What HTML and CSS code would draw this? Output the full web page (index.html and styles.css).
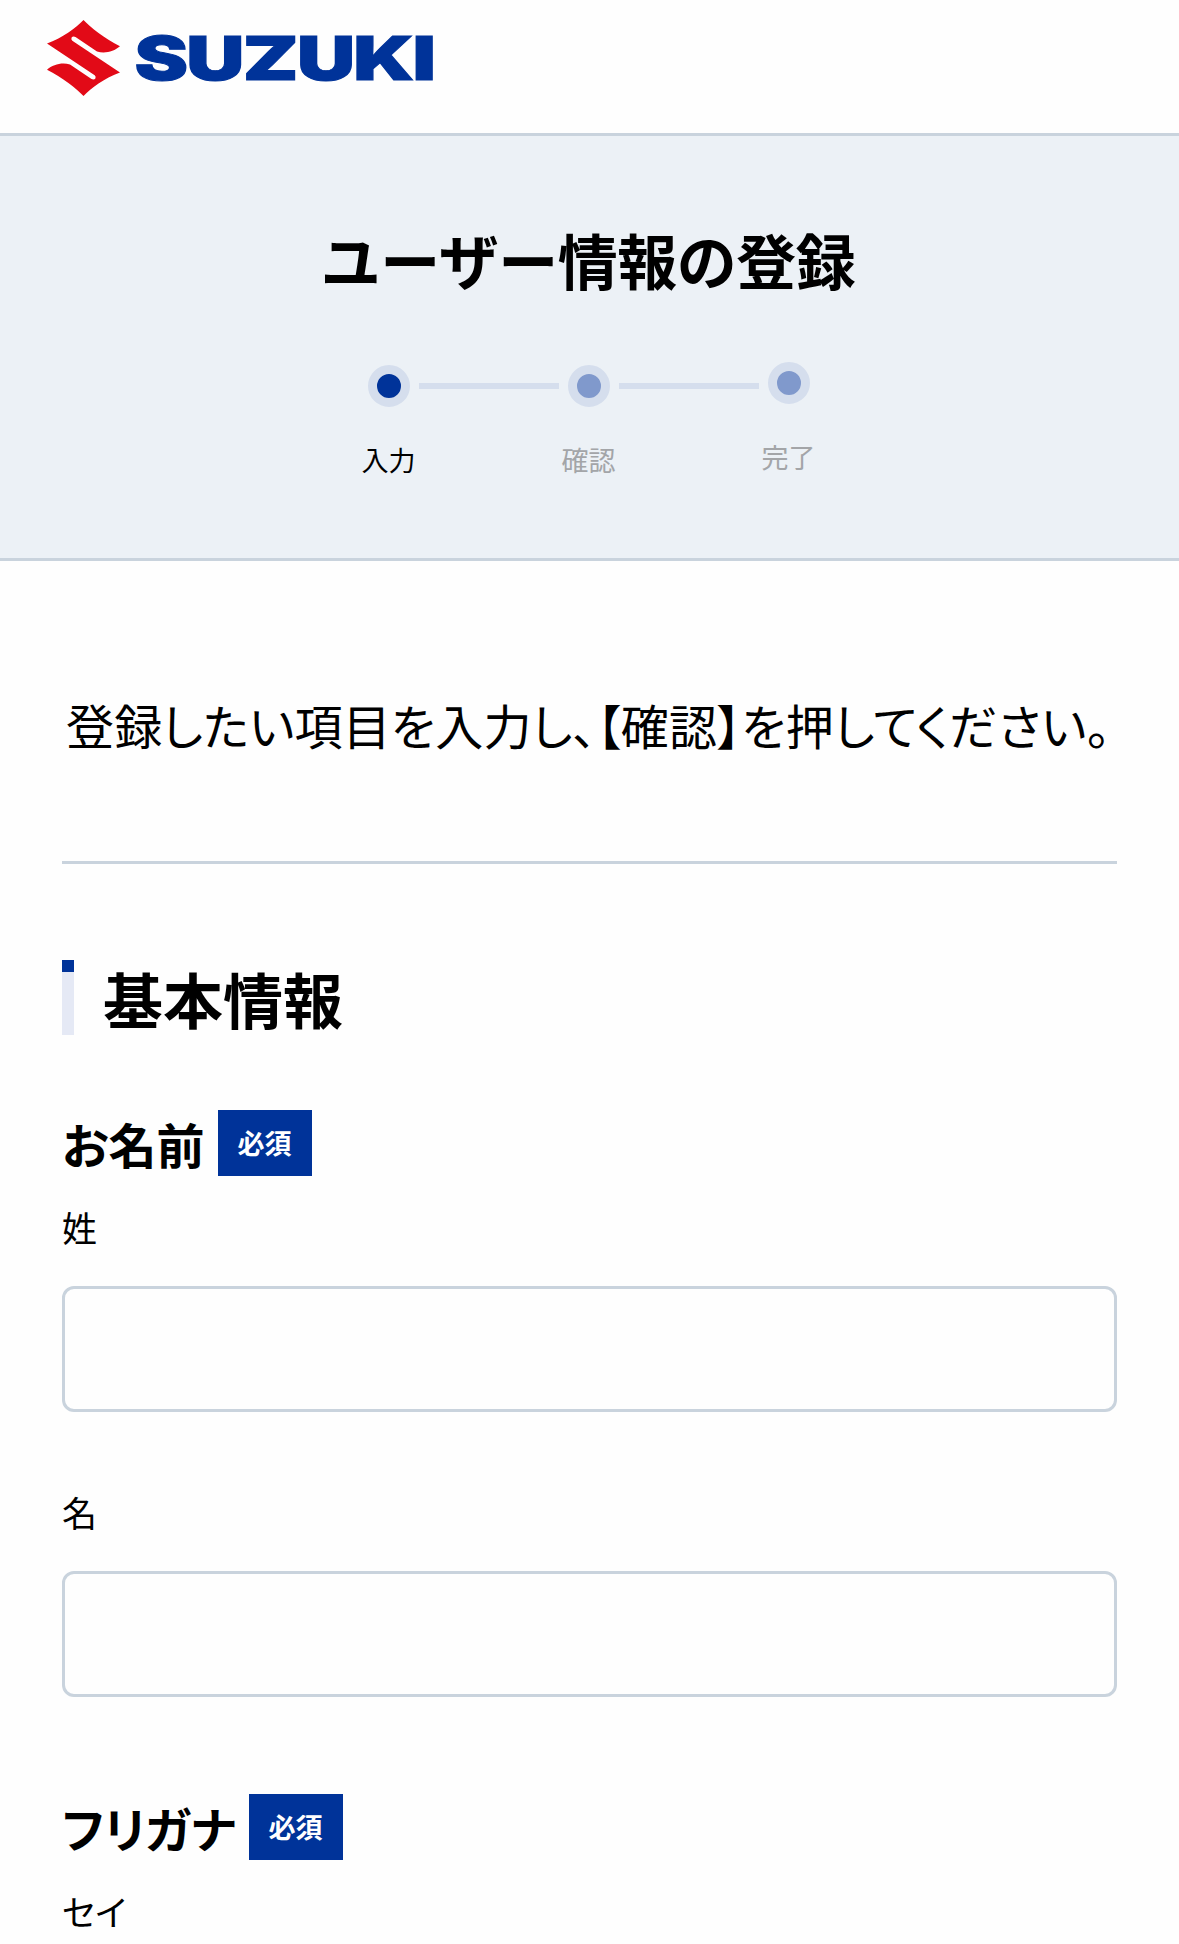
FILE: index.html
```
<!DOCTYPE html>
<html lang="ja">

<head>
    <meta charset="UTF-8">
    <meta name="viewport" content="width=device-width, initial-scale=1.0">
    <title>ユーザー情報の登録</title>
    <link rel="stylesheet" href="styles.css">
</head>

<body>
    <header class="site-header">
        <svg class="logo-mark" viewBox="0 0 73 76" aria-hidden="true">
            <path fill="#e20a17" d="M36.500 0C43 7 58 19 73 26.300C67 31.500 58 34 50 31.500L28.500 17Q26 15.800 24.600 17.600Q23.800 19.300 25.300 20.800L73 52.500C58 58 44 68 36.500 76C30 69 15 57 0 49.700C6 44.500 15 42 23 44.500L44.500 59Q47 60.200 48.400 58.400Q49.200 56.700 47.700 55.200L0 23.500C15 18 29 8 36.500 0Z"/>
        </svg>
        <svg class="logo-name" viewBox="0 0 300 54">
            <text class="logo-text" transform="translate(-2.500 49) scale(1.34 1)" textLength="225" lengthAdjust="spacing">SUZUKI</text>
        </svg>
    </header>

    <section class="page-head">
        <h1>ユーザー情報の登録</h1>
        <ol class="steps">
            <li class="step current">
                <span class="dot"></span>
                <span class="step-name">入力</span>
            </li>
            <li class="bar"></li>
            <li class="step">
                <span class="dot"></span>
                <span class="step-name">確認</span>
            </li>
            <li class="bar"></li>
            <li class="step last">
                <span class="dot"></span>
                <span class="step-name">完了</span>
            </li>
        </ol>
    </section>

    <main class="content">
        <p class="lead">登録したい項目を入力し、【確認】を押してください。</p>

        <form id="userForm">
            <h2>基本情報</h2>

            <!-- お名前 -->
            <div class="field-group">
                <h3><span class="field-title">お名前</span><span class="required">必須</span></h3>
                <label for="last-name">姓</label>
                <input type="text" id="last-name">
                <label for="first-name">名</label>
                <input type="text" id="first-name">
            </div>

            <!-- フリガナ -->
            <div class="field-group">
                <h3><span class="field-title">フリガナ</span><span class="required">必須</span></h3>
                <label for="last-kana">セイ</label>
            </div>
        </form>
    </main>
</body>

</html>
```
FILE: styles.css
```
* {
    box-sizing: border-box;
}

body {
    font-family: "Noto Sans CJK JP", sans-serif;
    font-feature-settings: "palt";
    margin: 0;
    height: 1944px;
    overflow: hidden;
    background-color: #fefefe;
    color: #000;
}

h1,
h2,
h3,
p,
ol {
    margin: 0;
    padding: 0;
}

.site-header {
    display: flex;
    align-items: flex-start;
    gap: 17px;
    height: 133px;
    padding: 20px 46px 0 47px;
}

.logo-mark {
    width: 73px;
    height: 76px;
}

.logo-name {
    width: 300px;
    height: 54px;
    margin-top: 11px;
    overflow: visible;
}

.logo-text {
    font-family: Inter, sans-serif;
    font-size: 60px;
    font-weight: 900;
    fill: #003399;
    stroke: #003399;
    stroke-width: 1px;
}

.page-head {
    height: 428px;
    padding-top: 78px;
    background-color: #ecf1f6;
    border-top: 3px solid #c9d3dd;
    border-bottom: 3px solid #c9d3dd;
}

h1 {
    padding-right: 3px;
    font-feature-settings: normal;
    font-size: 60px;
    letter-spacing: -0.5px;
    line-height: 89px;
    text-align: center;
}

.steps {
    display: flex;
    justify-content: center;
    gap: 9px;
    margin-top: 62px;
    padding-right: 2px;
    list-style: none;
}

.step {
    display: flex;
    flex-direction: column;
    align-items: center;
    width: 42px;
    color: #a3a5a8;
}

.step.last {
    margin-top: -3px;
}

.dot {
    width: 42px;
    height: 42px;
    border: 9px solid #d5deed;
    border-radius: 50%;
    background-color: #8099cc;
}

.step-name {
    margin-top: 33px;
    font-size: 27px;
    line-height: 40px;
    white-space: nowrap;
}

.step.current {
    color: #000;
}

.step.current .dot {
    background-color: #003399;
}

.bar {
    width: 140px;
    height: 6px;
    margin-top: 18px;
    background-color: #d5deed;
}

.content {
    padding: 127px 62px 0;
}

.lead {
    height: 176px;
    padding-left: 4px;
    border-bottom: 3px solid #c9d3dd;
    font-size: 48px;
    letter-spacing: 0.17px;
    line-height: 72px;
    white-space: nowrap;
}

h2 {
    height: 75px;
    margin-top: 96px;
    padding-left: 29px;
    border-left: 12px solid;
    border-image: linear-gradient(#003399 12px, #e5e9f5 12px) 0 0 0 12;
    font-feature-settings: normal;
    font-size: 60px;
    line-height: 75px;
}

.field-group {
    display: flex;
    flex-direction: column;
    margin-top: 75px;
}

.field-group + .field-group {
    margin-top: 97px;
}

h3 {
    display: flex;
    gap: 14px;
    height: 66px;
    font-size: 48px;
    line-height: 67px;
}

.required {
    width: 94px;
    height: 66px;
    padding-right: 2px;
    background-color: #003399;
    color: #fff;
    font-size: 27px;
    line-height: 65px;
    text-align: center;
}

label {
    height: 54px;
    margin-top: 25px;
    font-size: 35px;
    line-height: 51px;
}

input {
    width: 100%;
    height: 126px;
    margin-top: 31px;
    padding: 0 24px;
    border: 3px solid #c9d3dd;
    border-radius: 12px;
    background-color: #fefefe;
    font: inherit;
    font-size: 48px;
}

input:focus {
    outline: none;
    border-color: #003399;
}

input + label {
    margin-top: 74px;
}
```
